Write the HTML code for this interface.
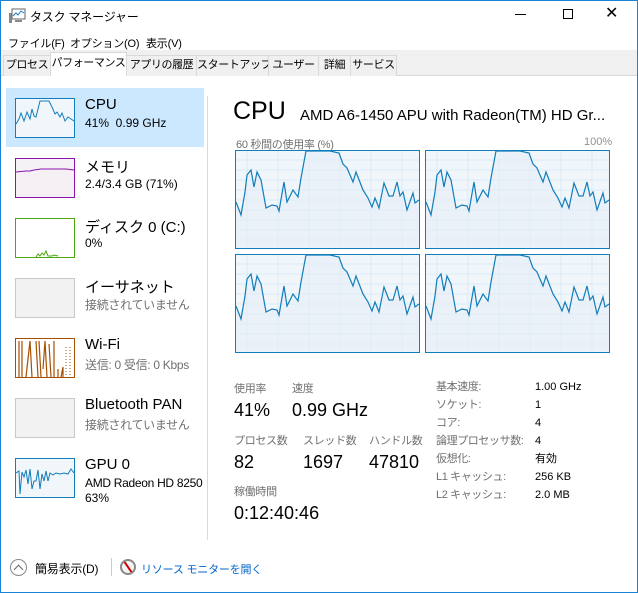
<!DOCTYPE html>
<html><head><meta charset="utf-8"><style>
*{margin:0;padding:0;box-sizing:border-box}
body{width:638px;height:593px;background:#fff;font-family:"Liberation Sans","Noto Sans CJK JP",sans-serif;position:relative;overflow:hidden;color:#000}
.a{position:absolute;white-space:nowrap}
.tab{position:absolute;top:55px;height:21px;background:#f0f0f0;border:1px solid #d9d9d9;border-bottom:none;font-size:11px;letter-spacing:-0.4px;line-height:19px;text-align:center;white-space:nowrap;overflow:hidden}
.thumb{position:absolute;left:15px;width:60px;height:40px;border:1px solid}
.t1{position:absolute;left:85px;font-size:15px;white-space:nowrap}
.t2{position:absolute;left:85px;font-size:12px;color:#000;white-space:nowrap}
.g{color:#707070}
.lb{font-size:11px;letter-spacing:-0.3px;color:#707070}
.vl{font-size:18px}
.m{font-size:11px;letter-spacing:-0.2px}
</style></head><body>
<div class="a" style="left:0;top:0;width:638px;height:593px;border:1px solid #1883d7"></div>
<svg class="a" style="left:8px;top:7px" width="18" height="17"><rect x="1" y="6" width="3" height="10" fill="#888"/><rect x="4" y="2" width="13" height="10" fill="#fff" stroke="#666"/><polyline points="5,9 8,6 10,8 13,4 16,6" fill="none" stroke="#1b78c8"/><rect x="7" y="13" width="7" height="2" fill="#888"/></svg>
<div class="a m" style="left:30px;top:8px;font-size:12px">タスク マネージャー</div>
<div class="a" style="left:515px;top:14px;width:11px;height:1px;background:#000"></div>
<div class="a" style="left:563px;top:9px;width:10px;height:10px;border:1px solid #000"></div>
<div class="a" style="left:605px;top:3px;font-size:16px;font-weight:300">✕</div>
<div class="a m" style="left:8px;top:35px">ファイル(F)</div>
<div class="a m" style="left:70px;top:35px">オプション(O)</div>
<div class="a m" style="left:146px;top:35px">表示(V)</div>
<div class="a" style="left:1px;top:50px;width:636px;height:26px;background:#f0f0f0"></div>
<div class="a" style="left:1px;top:75px;width:636px;height:1px;background:#d9d9d9"></div>
<div class="tab" style="left:3px;width:48px">プロセス</div>
<div class="tab" style="left:50px;width:77px;top:52px;height:24px;background:#fff;line-height:21px;z-index:2">パフォーマンス</div>
<div class="tab" style="left:126px;width:71px">アプリの履歴</div>
<div class="tab" style="left:196px;width:73px">スタートアップ</div>
<div class="tab" style="left:268px;width:51px">ユーザー</div>
<div class="tab" style="left:318px;width:33px">詳細</div>
<div class="tab" style="left:350px;width:47px">サービス</div>
<div class="a" style="left:207px;top:96px;width:1px;height:444px;background:#d9d9d9"></div>
<div class="a" style="left:6px;top:88px;width:198px;height:59px;background:#cce8ff"></div>
<svg class="thumb" style="top:98px;border-color:#117dbb;background:#f1f6fa" viewBox="0 0 58 38" preserveAspectRatio="none"><polyline points="0,25 3,20 5,14 8,22 11,13 14,20 16,10 18,17 20,18 22,10 24,2 29,2 33,2 36,8 39,15 41,13 44,18 46,14 49,22 52,18 55,20 58,22" fill="none" stroke="#117dbb"/></svg>
<div class="t1" style="top:96px">CPU</div><div class="t2" style="top:116px">41%&nbsp; 0.99 GHz</div>
<svg class="thumb" style="top:158px;border-color:#8b12ae;background:#f4f2f4" viewBox="0 0 58 38" preserveAspectRatio="none"><rect x="0" y="12" width="58" height="26" fill="#f4f0f4"/><polyline points="0,13 10,12 14,12 18,11 25,10 50,10 58,11" fill="none" stroke="#8b12ae"/></svg>
<div class="t1" style="top:156px">メモリ</div><div class="t2" style="top:177px">2.4/3.4 GB (71%)</div>
<svg class="thumb" style="top:218px;border-color:#4da60c;background:#fff" viewBox="0 0 58 38" preserveAspectRatio="none"><polyline points="20,38 22,35 24,37 26,34 28,36 30,32 32,37 36,37 38,36 42,37" fill="none" stroke="#4da60c"/></svg>
<div class="t1" style="top:216px">ディスク 0 (C:)</div><div class="t2" style="top:236px">0%</div>
<div class="thumb" style="top:278px;border-color:#c8c8c8;background:#f2f2f2"></div>
<div class="t1" style="top:276px">イーサネット</div><div class="t2 g" style="top:296px;letter-spacing:-0.3px">接続されていません</div>
<svg class="thumb" style="top:338px;border-color:#a74f01;background:#fff" viewBox="0 0 58 38" preserveAspectRatio="none"><path d="M3,2V38M6,2V38M10,38L14,2L16,38M20,2L22,38M23,2L25,38M27,30L29,2L31,38M33,5L35,38M38,2V38M42,30V38M45,38L47,28V38" fill="none" stroke="#a74f01" stroke-width="1.2"/><path d="M50,8V38M54,8V38" stroke="#a74f01" stroke-dasharray="1,2"/></svg>
<div class="t1" style="top:336px">Wi-Fi</div><div class="t2 g" style="top:356px;letter-spacing:-0.3px">送信: 0 受信: 0 Kbps</div>
<div class="thumb" style="top:398px;border-color:#c8c8c8;background:#f2f2f2"></div>
<div class="t1" style="top:396px">Bluetooth PAN</div><div class="t2 g" style="top:416px;letter-spacing:-0.3px">接続されていません</div>
<svg class="thumb" style="top:458px;border-color:#117dbb;background:#f1f6fa" viewBox="0 0 58 38" preserveAspectRatio="none"><polyline points="0,14 3,12 4,35 6,13 8,18 10,11 12,25 14,10 16,30 18,22 20,22 22,11 24,30 26,15 28,22 30,12 32,22 34,14 37,16 40,14 44,15 48,14 52,15 55,10 58,14" fill="none" stroke="#117dbb"/></svg>
<div class="t1" style="top:456px">GPU 0</div><div class="t2" style="top:476px;letter-spacing:-0.3px">AMD Radeon HD 8250</div><div class="t2" style="top:491px">63%</div>
<div class="a" style="left:233px;top:97px;font-size:25px">CPU</div>
<div class="a" style="left:300px;top:107px;font-size:15px">AMD A6-1450 APU with Radeon(TM) HD Gr...</div>
<div class="a" style="left:236px;top:136px;font-size:11px;letter-spacing:-0.3px;color:#707070">60 秒間の使用率 (%)</div>
<div class="a" style="left:584px;top:136px;font-size:11px;color:#909090">100%</div>
<svg class="a" style="left:235px;top:150px" width="376" height="204">
<defs><g id="gr"><rect x="0.5" y="0.5" width="184" height="98" fill="#f1f6fa" stroke="#117dbb"/>
<g stroke="#d9eaf7"><path d="M12,1V98M43,1V98M74,1V98M105,1V98M136,1V98M167,1V98M1,10H184M1,20H184M1,30H184M1,40H184M1,50H184M1,60H184M1,70H184M1,80H184M1,90H184"/></g>
<polygon points="71,1 104,3 108,14 112,18 118,32 121,22 128,40 133,48 137,57 140,48 144,58 149,33 154,46 158,46 162,32 165,46 168,42 172,60 178,43 180,53 184,50 184,98 1,98 1,52 6,65 10,42 12,25 16,20 19,37 22,22 26,30 31,58 37,55 42,56 44,61 49,32 52,52 58,40 63,47 66,28" fill="#e6eff7" opacity="0.6"/>
<polyline points="1,52 6,65 10,42 12,25 16,20 19,37 22,22 26,30 31,58 37,55 42,56 44,61 49,32 52,52 58,40 63,47 66,28 71,1 80,1 95,1 104,3 108,14 112,18 118,32 121,22 128,40 133,48 137,57 140,48 144,58 149,33 154,46 158,46 162,32 165,46 168,42 172,60 178,43 180,53 184,50" fill="none" stroke="#117dbb" stroke-width="1.2"/></g></defs>
<use href="#gr" x="0" y="0"/><use href="#gr" x="190" y="0"/><use href="#gr" x="0" y="104"/><use href="#gr" x="190" y="104"/>
</svg>
<div class="a lb" style="left:234px;top:380px">使用率</div>
<div class="a lb" style="left:292px;top:380px">速度</div>
<div class="a vl" style="left:234px;top:400px">41%</div>
<div class="a vl" style="left:292px;top:400px">0.99 GHz</div>
<div class="a lb" style="left:234px;top:432px">プロセス数</div>
<div class="a lb" style="left:303px;top:432px">スレッド数</div>
<div class="a lb" style="left:369px;top:432px">ハンドル数</div>
<div class="a vl" style="left:234px;top:452px">82</div>
<div class="a vl" style="left:303px;top:452px">1697</div>
<div class="a vl" style="left:369px;top:452px">47810</div>
<div class="a lb" style="left:234px;top:483px">稼働時間</div>
<div class="a vl" style="left:234px;top:503px">0:12:40:46</div>
<div class="a lb" style="left:436px;top:378px;line-height:18px;letter-spacing:-0.4px">基本速度:<br>ソケット:<br>コア:<br>論理プロセッサ数:<br>仮想化:<br>L1 キャッシュ:<br>L2 キャッシュ:</div>
<div class="a" style="left:535px;top:378px;font-size:11px;line-height:18px">1.00 GHz<br>1<br>4<br>4<br>有効<br>256 KB<br>2.0 MB</div>
<div class="a" style="left:10px;top:559px;width:17px;height:17px;border:1px solid #888;border-radius:50%"></div>
<div class="a" style="left:14px;top:563px;width:7px;height:7px;border-left:1px solid #666;border-top:1px solid #666;transform:translate(1px,3px) rotate(45deg)"></div>
<div class="a m" style="left:35px;top:560px;font-size:12px">簡易表示(D)</div>
<div class="a" style="left:111px;top:558px;width:1px;height:18px;background:#ccc"></div>
<div class="a" style="left:120px;top:559px;width:16px;height:16px;border:2px solid #888;border-radius:50%;background:#f4f4f4"></div>
<div class="a" style="left:127px;top:561px;width:2px;height:12px;background:#c00;transform:rotate(-35deg)"></div>
<div class="a m" style="left:141px;top:561px;color:#0066cc">リソース モニターを開く</div>
</body></html>
